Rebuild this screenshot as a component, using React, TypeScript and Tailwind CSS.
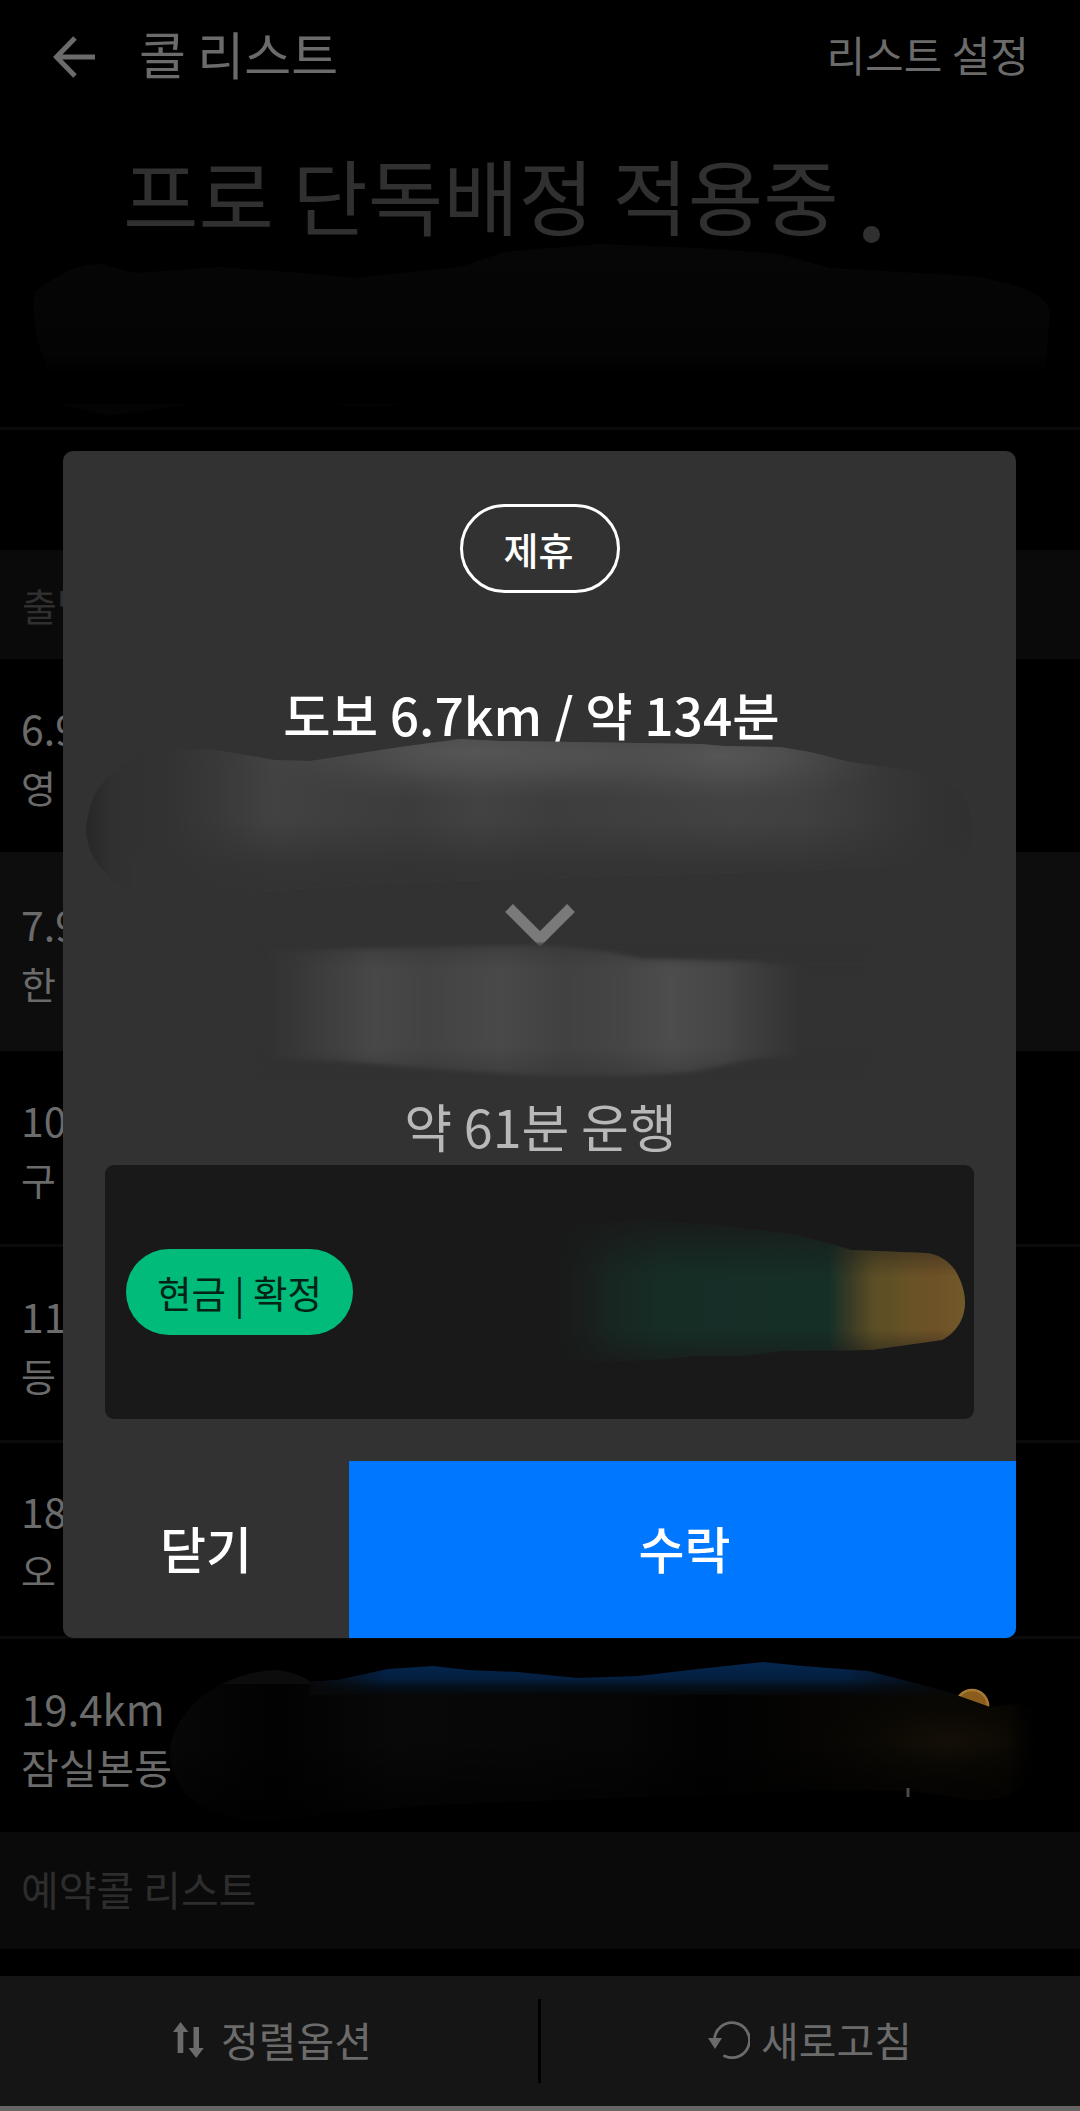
import type { ReactNode } from 'react'

interface Call {
  distance: string
  place: string
  className: string
}

const calls: Call[] = [
  { distance: '6.9', place: '영', className: 'h-[193px] pt-[39px]' },
  { distance: '7.9', place: '한', className: 'h-[199px] pt-[42px] bg-[#0d0d0d]' },
  { distance: '10', place: '구', className: 'h-[196px] pt-[39px] border-b-[3px] border-[#0a0a0a]' },
  { distance: '11', place: '등', className: 'h-[196px] pt-[39px] border-b-[3px] border-[#0a0a0a]' },
  { distance: '18', place: '오', className: 'h-[196px] pt-[38px] border-b-[3px] border-[#0a0a0a]' },
]

function BackIcon() {
  return (
    <svg width="42" height="42" viewBox="0 0 42 42" fill="none" stroke="#6b6b6b" strokeWidth="5">
      <path d="M22 2 3.5 21 22 40M4 21h38" />
    </svg>
  )
}

function SortIcon() {
  return (
    <svg width="31" height="36" viewBox="0 0 31 36" fill="#6b6b6b">
      <path d="M7.5 0 15.3 10H10.3V31H4.6V10H0zM20.5 5H26V26H30.7L23.2 36 15.5 26H20.5z" />
    </svg>
  )
}

function RefreshIcon() {
  return (
    <svg width="42" height="38" viewBox="0 0 42 38" fill="none">
      <path d="M6.5 19A17.5 17.5 0 1 1 16.5 35" stroke="#6b6b6b" strokeWidth="2.8" strokeLinecap="round" />
      <path d="M0 17h14L7 28z" fill="#6b6b6b" />
    </svg>
  )
}

function NoticeSmudge() {
  return (
    <svg width="1080" height="180" viewBox="0 0 1080 180">
      <defs>
        <linearGradient id="notice" x2="0" y2="1">
          <stop offset="0" stopColor="#060606" />
          <stop offset=".85" stopColor="#040404" />
          <stop offset="1" stopColor="#000" />
        </linearGradient>
      </defs>
      <path
        d="M35 50Q70 22 100 22L135 31 220 25 300 31 355 36 460 25 505 10 600 2 700 6 780 12 830 26 970 34Q1045 45 1050 70L1045 132H50Q30 90 35 50z"
        fill="url(#notice)"
      />
      <path d="M60 162H190L110 174zM310 162h105l-45 2z" fill="#040404" />
    </svg>
  )
}

function CallSmudge() {
  return (
    <svg width="900" height="170" viewBox="0 0 900 170">
      <defs>
        <linearGradient id="callTop" x2="0" y2="1">
          <stop offset="0" stopColor="#05264f" />
          <stop offset=".5" stopColor="#041f3f" />
          <stop offset=".75" stopColor="#04101d" />
          <stop offset="1" stopColor="#060708" />
        </linearGradient>
        <linearGradient id="callEdge">
          <stop offset="0" stopColor="#080808" />
          <stop offset=".12" stopColor="#080808" stopOpacity="0" />
          <stop offset=".82" stopColor="#080808" stopOpacity="0" />
          <stop offset="1" stopColor="#080808" />
        </linearGradient>
        <radialGradient id="callGold">
          <stop offset="0" stopColor="#151007" />
          <stop offset="1" stopColor="#070501" stopOpacity="0" />
        </radialGradient>
        <linearGradient id="callBody">
          <stop offset="0" stopColor="#070707" />
          <stop offset=".12" stopColor="#020202" />
          <stop offset=".25" stopColor="#080808" />
          <stop offset=".5" stopColor="#060606" />
          <stop offset=".6" stopColor="#020202" />
          <stop offset=".85" stopColor="#0a0805" />
          <stop offset=".93" stopColor="#080602" />
          <stop offset=".965" stopColor="#000" />
        </linearGradient>
        <linearGradient id="callRight">
          <stop offset="0" stopColor="#000" stopOpacity="0" />
          <stop offset="1" stopColor="#000" />
        </linearGradient>
        <linearGradient id="callFade" x2="0" y2="1">
          <stop offset="0" stopColor="#000" stopOpacity="0" />
          <stop offset="1" stopColor="#000" stopOpacity=".7" />
        </linearGradient>
        <clipPath id="callClip">
          <path d="M2 90C6 48 55 11 110 10Q130 12 146 24L170 30 780 32 808 42 822 47 850 44Q875 48 872 80C868 125 845 142 805 140L745 131 660 130 260 145 150 155C70 172 0 150 2 90z" />
        </clipPath>
      </defs>
      <circle cx="804" cy="46" r="16" fill="#8b5d1c" stroke="#a67a35" strokeWidth="2.5" />
      <g clipPath="url(#callClip)">
        <rect width="900" height="170" fill="url(#callBody)" />
        <ellipse cx="780" cy="82" rx="150" ry="56" fill="url(#callGold)" />
        <rect y="80" width="900" height="80" fill="url(#callFade)" />
        <rect x="840" width="30" height="170" fill="url(#callRight)" />
        <rect x="870" width="30" height="170" />
        <path d="M0 0H150V24H20z" fill="#0c0c0c" />
      </g>
      <path
        d="M142 22 170 20 220 9 265 6 300 10 350 12 410 18 470 16 530 9 595 2 635 6 700 11 750 24 790 35H142z"
        fill="url(#callTop)"
      />
      <path
        d="M142 22 170 20 220 9 265 6 300 10 350 12 410 18 470 16 530 9 595 2 635 6 700 11 750 24 790 35H142z"
        fill="url(#callEdge)"
      />
      <path d="M740 128v9" stroke="#4a4a4a" strokeWidth="3" />
    </svg>
  )
}

function OriginSmudge() {
  return (
    <svg width="900" height="165" viewBox="0 0 900 165">
      <defs>
        <linearGradient id="originX">
          <stop offset="0" stopColor="#272727" />
          <stop offset=".03" stopColor="#303030" />
          <stop offset=".1" stopColor="#333" />
          <stop offset=".17" stopColor="#3c3c3c" />
          <stop offset=".21" stopColor="#424242" />
          <stop offset=".27" stopColor="#3f3f3f" />
          <stop offset=".36" stopColor="#3c3c3c" />
          <stop offset=".44" stopColor="#424242" />
          <stop offset=".52" stopColor="#3d3d3d" />
          <stop offset=".6" stopColor="#3f3f3f" />
          <stop offset=".72" stopColor="#424242" />
          <stop offset=".8" stopColor="#404040" />
          <stop offset=".88" stopColor="#383838" />
          <stop offset=".94" stopColor="#323232" />
          <stop offset="1" stopColor="#2f2f2f" />
        </linearGradient>
        <radialGradient id="originTop">
          <stop offset="0" stopColor="#585858" />
          <stop offset=".4" stopColor="#525252" stopOpacity=".7" />
          <stop offset="1" stopColor="#444" stopOpacity="0" />
        </radialGradient>
        <linearGradient id="originFade" x2="0" y2="1">
          <stop offset="0" stopColor="#323232" stopOpacity="0" />
          <stop offset=".55" stopColor="#323232" stopOpacity=".85" />
          <stop offset="1" stopColor="#323232" />
        </linearGradient>
        <clipPath id="originClip">
          <path d="M1 92C3 62 16 42 30 34Q48 14 66 12L125 11 190 22 225 23 315 9 375 1 415 3 615 6 640 8 695 9 725 14 765 24 840 34Q887 48 887 90T855 128L300 145 70 160Q50 158 28 142 2 120 1 92z" />
        </clipPath>
      </defs>
      <g clipPath="url(#originClip)">
        <rect width="900" height="165" fill="url(#originX)" />
        <ellipse cx="390" cy="14" rx="240" ry="52" fill="url(#originTop)" />
        <ellipse cx="635" cy="18" rx="170" ry="52" fill="url(#originTop)" />
        <ellipse cx="500" cy="18" rx="170" ry="45" fill="url(#originTop)" opacity=".5" />
        <rect x="45" y="82" width="855" height="83" fill="url(#originFade)" />
      </g>
    </svg>
  )
}

function DestinationSmudge() {
  return (
    <svg width="620" height="140" viewBox="0 0 620 140">
      <defs>
        <linearGradient id="dest">
          <stop offset="0" stopColor="#323232" />
          <stop offset=".05" stopColor="#373737" />
          <stop offset=".2" stopColor="#484848" />
          <stop offset=".3" stopColor="#434343" />
          <stop offset=".44" stopColor="#494949" />
          <stop offset=".56" stopColor="#414141" />
          <stop offset=".66" stopColor="#454545" />
          <stop offset=".76" stopColor="#4d4d4d" />
          <stop offset=".86" stopColor="#464646" />
          <stop offset=".95" stopColor="#393939" />
          <stop offset="1" stopColor="#333" />
        </linearGradient>
        <linearGradient id="destFade" x2="0" y2="1">
          <stop offset="0" stopColor="#323232" stopOpacity=".5" />
          <stop offset=".2" stopColor="#323232" stopOpacity="0" />
          <stop offset=".75" stopColor="#323232" stopOpacity="0" />
          <stop offset="1" stopColor="#323232" stopOpacity=".6" />
        </linearGradient>
        <filter id="destBlur" colorInterpolationFilters="sRGB">
          <feGaussianBlur stdDeviation="2" />
        </filter>
      </defs>
      <g filter="url(#destBlur)">
        <path
          d="M15 8 150 6 290 3 350 9 390 17 500 19 545 24V113L500 117 440 130 380 134 290 134 180 127 100 120 15 116z"
          fill="url(#dest)"
        />
        <rect width="620" height="140" fill="url(#destFade)" />
      </g>
    </svg>
  )
}

function FareSmudge() {
  return (
    <svg width="413" height="150" viewBox="0 0 413 150">
      <defs>
        <linearGradient id="fare">
          <stop offset="0" stopColor="#191919" />
          <stop offset=".12" stopColor="#182521" />
          <stop offset=".25" stopColor="#162d26" />
          <stop offset=".66" stopColor="#152f27" />
          <stop offset=".71" stopColor="#383a25" />
          <stop offset=".77" stopColor="#5b4e25" />
          <stop offset=".86" stopColor="#685226" />
          <stop offset=".92" stopColor="#6e5127" />
          <stop offset="1" stopColor="#715a2a" />
        </linearGradient>
        <linearGradient id="fareFade" x2="0" y2="1">
          <stop offset="0" stopColor="#191919" stopOpacity=".9" />
          <stop offset=".4" stopColor="#191919" stopOpacity="0" />
          <stop offset=".75" stopColor="#191919" stopOpacity="0" />
          <stop offset="1" stopColor="#191919" stopOpacity=".8" />
        </linearGradient>
        <clipPath id="fareClip">
          <path d="M0 10 80 4 150 8 230 17 270 27 290 33 365 36Q383 38 394 53C413 84 403 112 381 123L310 133 220 134 180 139 130 139 90 143 0 145z" />
        </clipPath>
      </defs>
      <g clipPath="url(#fareClip)">
        <rect width="406" height="150" fill="url(#fare)" />
        <rect width="406" height="150" fill="url(#fareFade)" />
      </g>
    </svg>
  )
}

function CallRow({ distance, place, className }: Call) {
  return (
    <div className={`flex flex-col pl-[21px] text-[41px] leading-[59px] text-[#6b6b6b] ${className}`}>
      <span className="h-[59px]">{distance}</span>
      <span className="text-[38px] leading-[59px]">{place}</span>
    </div>
  )
}

function FooterButton({ icon, label, className }: { icon: ReactNode; label: string; className: string }) {
  return (
    <button className={`flex items-center pb-[3px] text-[41px] text-[#6b6b6b] ${className}`}>
      {icon}
      {label}
    </button>
  )
}

function CallDialog() {
  return (
    <div className="absolute top-[451px] left-[63px] flex h-[1187px] w-[953px] flex-col overflow-hidden rounded-[10px] bg-[#323232] text-white">
      <div className="mt-[53px] flex h-[89px] w-[160px] shrink-0 items-center justify-center self-center rounded-full border-[3px] border-white pr-[2px] text-[38px] font-medium">
        제휴
      </div>
      <div className="mt-[85px] h-[60px] pr-[16px] text-center text-[51.5px] leading-[71px] font-medium whitespace-nowrap">
        도보 6.7km / 약 134분
      </div>
      <div className="h-[165px] pl-[22px]">
        <OriginSmudge />
      </div>
      <svg className="mt-[1px] shrink-0 self-center" width="70" height="42" viewBox="0 0 70 42" fill="none">
        <path d="M4 4 35 35 66 4" stroke="#7a7a7a" strokeWidth="11" />
      </svg>
      <div className="-mt-[4px] h-[149px] pl-[190px]">
        <DestinationSmudge />
      </div>
      <div className="h-[74px] pl-[2px] text-center text-[52px] leading-[70px] text-[#b8b8b8]">약 61분 운행</div>
      <div className="mx-[42px] flex h-[254px] shrink-0 items-center justify-between rounded-[9px] bg-[#191919] pl-[21px]">
        <div className="flex h-[86px] w-[227px] items-center justify-center rounded-full bg-[#00bb7a] text-[37.5px] text-[#032315]">
          현금 | 확정
        </div>
        <FareSmudge />
      </div>
      <div className="mt-auto flex h-[177px] shrink-0 text-[50px] font-medium">
        <button className="w-[286px] pb-[4px]">닫기</button>
        <button className="flex-1 bg-[#0077ff] pb-[4px] pl-[4px]">수락</button>
      </div>
    </div>
  )
}

export default function App() {
  return (
    <div className="relative flex h-[2111px] w-[1080px] flex-col overflow-hidden bg-black font-['Noto_Sans_CJK_KR',sans-serif]">
      <header className="flex h-[114px] shrink-0 items-center pr-[51px] pl-[53px] text-[#6b6b6b]">
        <BackIcon />
        <h1 className="ml-[44px] pb-[8px] text-[51px]">콜 리스트</h1>
        <span className="ml-auto pb-[8px] text-[42px]">리스트 설정</span>
      </header>

      <div className="flex h-[128px] shrink-0 items-center gap-[24px] pl-[123px] text-[82px] leading-[128px] text-[#303030]">
        <span className="pt-[32px]">프로 단독배정 적용중</span>
        <span className="mt-[112px] size-[17px] rounded-full bg-[#303030]" />
      </div>
      <div className="h-[188px] shrink-0 border-b-[3px] border-[#0a0a0a]">
        <NoticeSmudge />
      </div>
      <div className="mt-[120px] flex h-[109px] shrink-0 items-center bg-[#0a0a0a] pl-[22px] text-[38px] text-[#2f2f2f]">
        출발
      </div>

      <div className="flex shrink-0 flex-col">
        {calls.map((call) => (
          <CallRow key={call.distance} {...call} />
        ))}
      </div>

      {/* Last call of the list, only partly covered */}
      <div className="flex h-[193px] shrink-0 pl-[21px] text-[#6b6b6b]">
        <div className="flex w-[147px] flex-col pt-[39px] text-[42px] leading-[59px] whitespace-nowrap">
          <span>19.4km</span>
          <span className="text-[41px]">잠실본동</span>
        </div>
        <div className="pt-[21px]">
          <CallSmudge />
        </div>
      </div>
      <div className="flex h-[117px] shrink-0 items-center bg-[#0a0a0a] pb-[4px] pl-[21px] text-[41px] text-[#2d2d2d]">
        예약콜 리스트
      </div>

      <footer className="mt-[27px] flex h-[135px] shrink-0 items-stretch border-b-[5px] border-[#656565] bg-[#151515]">
        <FooterButton icon={<SortIcon />} label="정렬옵션" className="w-[538px] gap-[17px] pl-[173px]" />
        <div className="my-[23px] w-[3px] bg-black" />
        <FooterButton icon={<RefreshIcon />} label="새로고침" className="flex-1 gap-[11px] pl-[167px]" />
      </footer>

      <CallDialog />
    </div>
  )
}
